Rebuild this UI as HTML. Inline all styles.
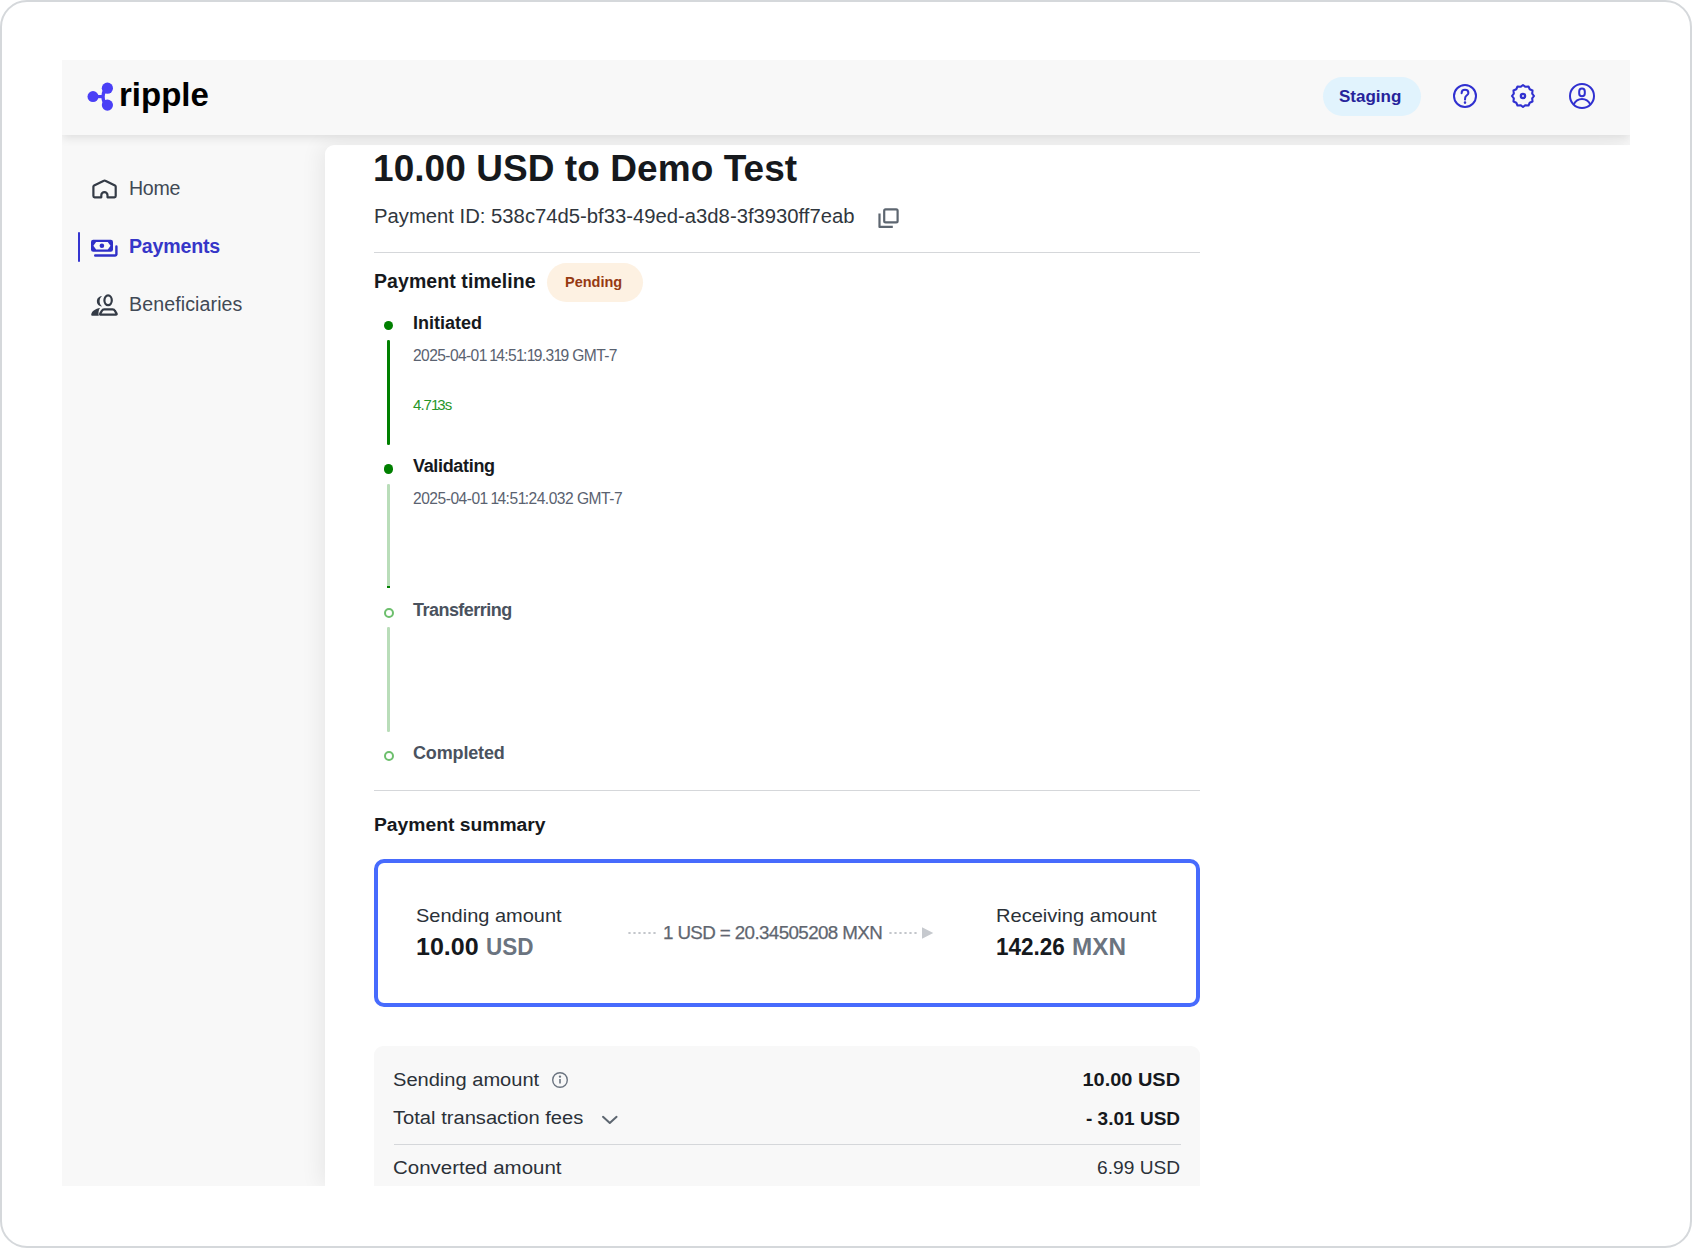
<!DOCTYPE html>
<html><head><meta charset="utf-8">
<style>
*{box-sizing:border-box;margin:0;padding:0}
html,body{width:1692px;height:1248px;overflow:hidden;background:#fff;font-family:"Liberation Sans",sans-serif}
.frame{position:absolute;left:0;top:0;width:1692px;height:1248px;border:2px solid #d5d8db;border-radius:27px}
.app{position:absolute;left:62px;top:60px;width:1568px;height:1126px;overflow:hidden;background:#f8f8f8}
.hdr{position:absolute;left:0;top:0;width:1568px;height:75px;background:#f8f8f8;z-index:3;box-shadow:0 3px 9px rgba(0,0,0,0.10)}
.card{position:absolute;left:263px;top:85px;width:1305px;height:1041px;background:#fff;border-top-left-radius:9px;box-shadow:-4px 0 22px rgba(0,0,0,0.07);z-index:1}
.t{position:absolute;white-space:nowrap;line-height:1}
.b{font-weight:bold}
.n{font-style:normal;margin-right:-1.2px}
</style></head>
<body>
<div class="frame"></div>
<div class="app">
  <div class="hdr">
    <!-- logo -->
    <svg style="position:absolute;left:24px;top:22px" width="30" height="30" viewBox="0 0 30 30">
      <g fill="#4a3ff6">
        <circle cx="7" cy="14.6" r="5.5"/>
        <circle cx="21.4" cy="6.2" r="5.6"/>
        <circle cx="21.4" cy="23.1" r="5.6"/>
      </g>
      <path d="M8 14.6 L17 14.6" stroke="#4a3ff6" stroke-width="3.2" fill="none"/>
      <path d="M21.4 6.2 C15.6 9.4 15.6 19.9 21.4 23.1" stroke="#4a3ff6" stroke-width="3.4" fill="none"/>
    </svg>
    <div class="t b" id="logo" style="left:57px;top:18px;font-size:33px;color:#000">ripple</div>
    <div style="position:absolute;left:1261px;top:17px;width:98px;height:39px;border-radius:20px;background:#e1f3fd"></div>
    <div class="t b" id="staging" style="left:1277px;top:28px;font-size:17px;color:#26239b">Staging</div>

    <svg style="position:absolute;left:1389px;top:22px" width="28" height="28" viewBox="0 0 28 28" fill="none" stroke="#3030d0" stroke-width="2">
      <circle cx="14" cy="14" r="11"/>
      <path d="M10.6 11.2 C10.6 9 12.2 7.8 14 7.8 C15.9 7.8 17.4 9.1 17.4 10.9 C17.4 12.9 15.2 13.3 14.3 15.2 L14 17.6" stroke-linecap="round"/>
      <circle cx="14" cy="20.6" r="0.6" fill="#2e2ed2" stroke-width="1.4"/>
    </svg>
    <svg style="position:absolute;left:1447px;top:22px" width="28" height="28" viewBox="0 0 28 28" fill="none" stroke="#3030d0" stroke-width="2.1" stroke-linejoin="round">
      <path d="M14.00 3.00 L16.46 4.82 L19.50 4.47 L20.72 7.28 L23.53 8.50 L23.18 11.54 L25.00 14.00 L23.18 16.46 L23.53 19.50 L20.72 20.72 L19.50 23.53 L16.46 23.18 L14.00 25.00 L11.54 23.18 L8.50 23.53 L7.28 20.72 L4.47 19.50 L4.82 16.46 L3.00 14.00 L4.82 11.54 L4.47 8.50 L7.28 7.28 L8.50 4.47 L11.54 4.82 Z"/>
      <circle cx="14" cy="14" r="2.1" stroke-width="2.4"/>
    </svg>
    <svg style="position:absolute;left:1505px;top:21px" width="30" height="30" viewBox="0 0 30 30" fill="none" stroke="#3030d0" stroke-width="2">
      <circle cx="15" cy="15" r="12"/>
      <rect x="12.2" y="7.6" width="5.6" height="7.6" rx="2.8"/>
      <path d="M6.6 23.6 C8.6 19.6 11.4 18 15 18 C18.6 18 21.4 19.6 23.4 23.6"/>
    </svg>
  </div>

  <!-- sidebar -->
  <svg style="position:absolute;left:29px;top:117px" width="28" height="24" viewBox="0 0 28 24" fill="none" stroke="#343b46" stroke-width="2.2" stroke-linejoin="round">
    <path d="M10.3 20.3 H3.6 Q2.4 20.3 2.4 19.1 V9.6 Q2.4 8.8 3.1 8.4 L12.9 3.7 Q13.6 3.3 14.3 3.7 L24 8.4 Q24.7 8.8 24.7 9.6 V19.1 Q24.7 20.3 23.5 20.3 H16.5 V18.3 A3.1 3.1 0 0 0 10.3 18.3 Z"/>
  </svg>
  <div class="t" id="home" style="left:67px;top:118.7px;font-size:19.6px;letter-spacing:-0.3px;color:#414955">Home</div>
  <div style="position:absolute;left:16px;top:172px;width:2px;height:30px;background:#3535d0;border-radius:1px"></div>
  <svg style="position:absolute;left:29px;top:178px" width="28" height="20" viewBox="0 0 28 20">
    <rect x="0" y="1.8" width="22" height="12" rx="2.2" fill="#2f2fc8"/>
    <path d="M2.4 7.8 L5.1 4 H16.8 L19.5 7.8 L16.8 11.4 H5.1 Z" fill="#f8f8f8"/>
    <circle cx="10.9" cy="7.8" r="2.3" fill="#2f2fc8"/>
    <path d="M4.2 17.5 H24.2 Q25.4 17.5 25.4 16.3 V8.4" fill="none" stroke="#3030c8" stroke-width="2.4" stroke-linecap="round"/>
  </svg>
  <div class="t b" id="payments" style="left:67px;top:176.7px;font-size:19.6px;letter-spacing:-0.2px;color:#3636c8">Payments</div>
  <svg style="position:absolute;left:28px;top:232px" width="30" height="26" viewBox="0 0 30 26">
    <ellipse cx="18.1" cy="8.3" rx="3.7" ry="4.9" fill="none" stroke="#343b46" stroke-width="2.2"/>
    <path d="M10.8 22.7 H25.9 Q27 22.7 26.6 21.6 L24.8 18.6 Q24.2 17.3 22.6 17.3 H14.2 Q12.6 17.3 12 18.6 L10.2 21.6 Q9.8 22.7 10.8 22.7 Z" fill="none" stroke="#343b46" stroke-width="2.2" stroke-linejoin="round"/>
    <path d="M12.1 3.9 C8 4.6 6.9 7 6.9 9.2 C6.9 11.6 8 13.8 12.1 14.5 C10.2 12.8 9.6 11 9.6 9.2 C9.6 7.4 10.2 5.6 12.1 3.9 Z" fill="#343b46"/>
    <path d="M10 16.1 C5.6 16.6 1.8 19.4 1.2 22.4 Q1 23.8 2.4 23.8 H8.8 C8.2 21 8.4 18.4 10 16.1 Z" fill="#343b46"/>
  </svg>
  <div class="t" id="benef" style="left:67px;top:234.7px;font-size:19.6px;letter-spacing:0.1px;color:#414955">Beneficiaries</div>
  <div class="card"></div>
  <div class="content" style="position:absolute;left:-62px;top:-60px;width:1692px;height:1248px;z-index:2">
    <div class="t b" id="title" style="left:373px;top:149.98px;font-size:37px;color:#16191d;letter-spacing:0.06px;">10.00 USD to Demo Test</div>
    <div class="t" id="pid" style="left:374px;top:207.12px;font-size:19.7px;color:#30363d;transform:scaleX(1.029);transform-origin:0 0;">Payment ID: 538c74d5-bf33-49ed-a3d8-3f3930ff7eab</div>
    <svg style="position:absolute;left:877px;top:207px" width="22" height="22" viewBox="0 0 22 22" fill="none" stroke="#5d6670" stroke-width="2.2">
      <rect x="7.2" y="2.3" width="13.4" height="13.1" rx="1.4"/>
      <path d="M2.5 6.5 V19.9 H15.8" stroke-linejoin="round"/>
    </svg>
    <div style="position:absolute;left:374px;top:252px;width:826px;height:1px;background:#d5d7da"></div>
    <div class="t b" id="ptl" style="left:374px;top:271.59px;font-size:19.5px;color:#16191d;letter-spacing:0.08px;">Payment timeline</div>
    <div style="position:absolute;left:546.5px;top:263px;width:96px;height:39px;border-radius:20px;background:#fdf1e2"></div>
    <div class="t b" id="pending" style="left:565px;top:274.63px;font-size:14.5px;color:#963a12">Pending</div>

    <!-- timeline -->
    <div style="position:absolute;left:384.1px;top:321.1px;width:9.4px;height:9.4px;border-radius:50%;background:#007f00"></div>
    <div style="position:absolute;left:387.2px;top:340.4px;width:2.6px;height:104.5px;border-radius:1.3px;background:#008000"></div>
    <div class="t b" id="init" style="left:413px;top:314.36px;font-size:18px;color:#16191d">Initiated</div>
    <div class="t" id="d1" style="left:413px;top:348.09px;font-size:15.6px;color:#5a6270;letter-spacing:-0.6px;">2025-04-0<i class="n">1</i> <i class="n">1</i>4:5<i class="n">1</i>:<i class="n">1</i>9.3<i class="n">1</i>9 GMT-7</div>
    <div class="t" id="dur" style="left:413px;top:397.1px;font-size:15px;color:#26962a;letter-spacing:-0.95px;">4.7<i class="n">1</i>3s</div>

    <div style="position:absolute;left:384.1px;top:464.4px;width:9.4px;height:9.4px;border-radius:50%;background:#007f00"></div>
    <div style="position:absolute;left:387.3px;top:484.2px;width:2.6px;height:104.3px;border-radius:1.3px;background:#b9ddb9"></div>
    <div style="position:absolute;left:387.3px;top:585.9px;width:2.6px;height:2.6px;background:#007f00"></div>
    <div class="t b" id="valid" style="left:413px;top:457.26px;font-size:18px;color:#16191d;letter-spacing:-0.33px;">Validating</div>
    <div class="t" id="d2" style="left:413px;top:491.39px;font-size:15.6px;color:#5a6270;letter-spacing:-0.5px;">2025-04-0<i class="n">1</i> <i class="n">1</i>4:5<i class="n">1</i>:24.032 GMT-7</div>

    <div style="position:absolute;left:383.9px;top:608px;width:9.9px;height:9.9px;border-radius:50%;border:2.2px solid #6dbf6d"></div>
    <div style="position:absolute;left:387.3px;top:627.2px;width:2.6px;height:104.5px;border-radius:1.3px;background:#b9ddb9"></div>
    <div class="t b" id="trans" style="left:413px;top:600.96px;font-size:18px;color:#4a525e;letter-spacing:-0.53px;">Transferring</div>

    <div style="position:absolute;left:383.9px;top:751px;width:9.9px;height:9.9px;border-radius:50%;border:2.2px solid #6dbf6d"></div>
    <div class="t b" id="compl" style="left:413px;top:744.26px;font-size:18px;color:#4a525e;letter-spacing:-0.15px;">Completed</div>

    <div style="position:absolute;left:374px;top:790px;width:826px;height:1px;background:#d5d7da"></div>
    <div class="t b" id="psum" style="left:374px;top:815.77px;font-size:18.7px;color:#16191d;transform:scaleX(1.032);transform-origin:0 0;">Payment summary</div>

    <!-- blue box -->
    <div style="position:absolute;left:374px;top:858.8px;width:826px;height:148.6px;border:4px solid #476bfd;border-radius:10px"></div>
    <div class="t" id="sa" style="left:416px;top:906.94px;font-size:18.5px;color:#2b3138;transform:scaleX(1.081);transform-origin:0 0;">Sending amount</div>
    <div class="t b" id="sav1" style="transform:scaleX(1.075);transform-origin:0 0;left:416px;top:935.58px;font-size:23.3px;color:#16191d">10.00</div>
    <div class="t b" id="sav2" style="transform:scaleX(0.966);transform-origin:0 0;left:485.6px;top:935.58px;font-size:23.3px;color:#6b7480">USD</div>
    <div class="t" id="rate" style="left:663px;top:924px;font-size:18.8px;color:#5f6670;letter-spacing:-0.62px;-webkit-text-stroke:0.25px #5f6670;">1 USD = 20.34505208 MXN</div>
    <div style="position:absolute;left:626.7px;top:932px;width:31px;height:2px;background:radial-gradient(circle,#c3c6cb 1px,transparent 1.3px) 0 0/5px 2px repeat-x"></div>
    <div style="position:absolute;left:888px;top:932px;width:30px;height:2px;background:radial-gradient(circle,#c3c6cb 1px,transparent 1.3px) 0 0/5px 2px repeat-x"></div>
    <svg style="position:absolute;left:921px;top:926px" width="14" height="14" viewBox="0 0 14 14"><path d="M1 1.2 L12.3 7 L1 12.8 Z" fill="#c6c9ce"/></svg>
    <div class="t" id="ra" style="left:996px;top:906.94px;font-size:18.5px;color:#2b3138;transform:scaleX(1.085);transform-origin:0 0;">Receiving amount</div>
    <div class="t b" id="rav1" style="transform:scaleX(0.966);transform-origin:0 0;left:996.4px;top:935.58px;font-size:23.3px;color:#16191d">142.26</div>
    <div class="t b" id="rav2" style="transform:scaleX(1.042);transform-origin:0 0;left:1072.3px;top:935.58px;font-size:23.3px;color:#6b7480">MXN</div>

    <!-- gray box -->
    <div style="position:absolute;left:374px;top:1046.3px;width:826px;height:200px;background:#f8f8f8;border-radius:9px"></div>
    <div class="t" id="r1" style="left:393px;top:1070.86px;font-size:18px;color:#2b3138;transform:scaleX(1.115);transform-origin:0 0;">Sending amount</div>
    <svg style="position:absolute;left:550.7px;top:1071.3px" width="18" height="18" viewBox="0 0 18 18" fill="none" stroke="#6b7480" stroke-width="1.4">
      <circle cx="9" cy="9" r="7.3"/>
      <path d="M9 8 V12.6" stroke-width="1.6"/>
      <circle cx="9" cy="5.6" r="0.5" fill="#6b7480"/>
    </svg>
    <div class="t b" id="r1v" style="right:512px;top:1070.76px;font-size:18px;color:#16191d;transform:scaleX(1.108);transform-origin:100% 0;">10.00 USD</div>
    <div class="t" id="r2" style="left:393px;top:1109.26px;font-size:18px;color:#2b3138;transform:scaleX(1.119);transform-origin:0 0;">Total transaction fees</div>
    <svg style="position:absolute;left:600px;top:1113px" width="20" height="14" viewBox="0 0 20 14" fill="none" stroke="#5d6670" stroke-width="2" stroke-linecap="round" stroke-linejoin="round">
      <path d="M3 3.8 L9.8 10 L16.6 3.8"/>
    </svg>
    <div class="t b" id="r2v" style="right:512px;top:1109.76px;font-size:18px;color:#16191d;transform:scaleX(1.056);transform-origin:100% 0;">- 3.01 USD</div>
    <div style="position:absolute;left:394px;top:1143.5px;width:787px;height:1px;background:#d5d7da"></div>
    <div class="t" id="r3" style="left:393px;top:1159.16px;font-size:18px;color:#2b3138;transform:scaleX(1.138);transform-origin:0 0;">Converted amount</div>
    <div class="t" id="r3v" style="right:512px;top:1159.36px;font-size:18px;color:#2b3138;transform:scaleX(1.063);transform-origin:100% 0;">6.99 USD</div>
  </div>

</div>
</body></html>
